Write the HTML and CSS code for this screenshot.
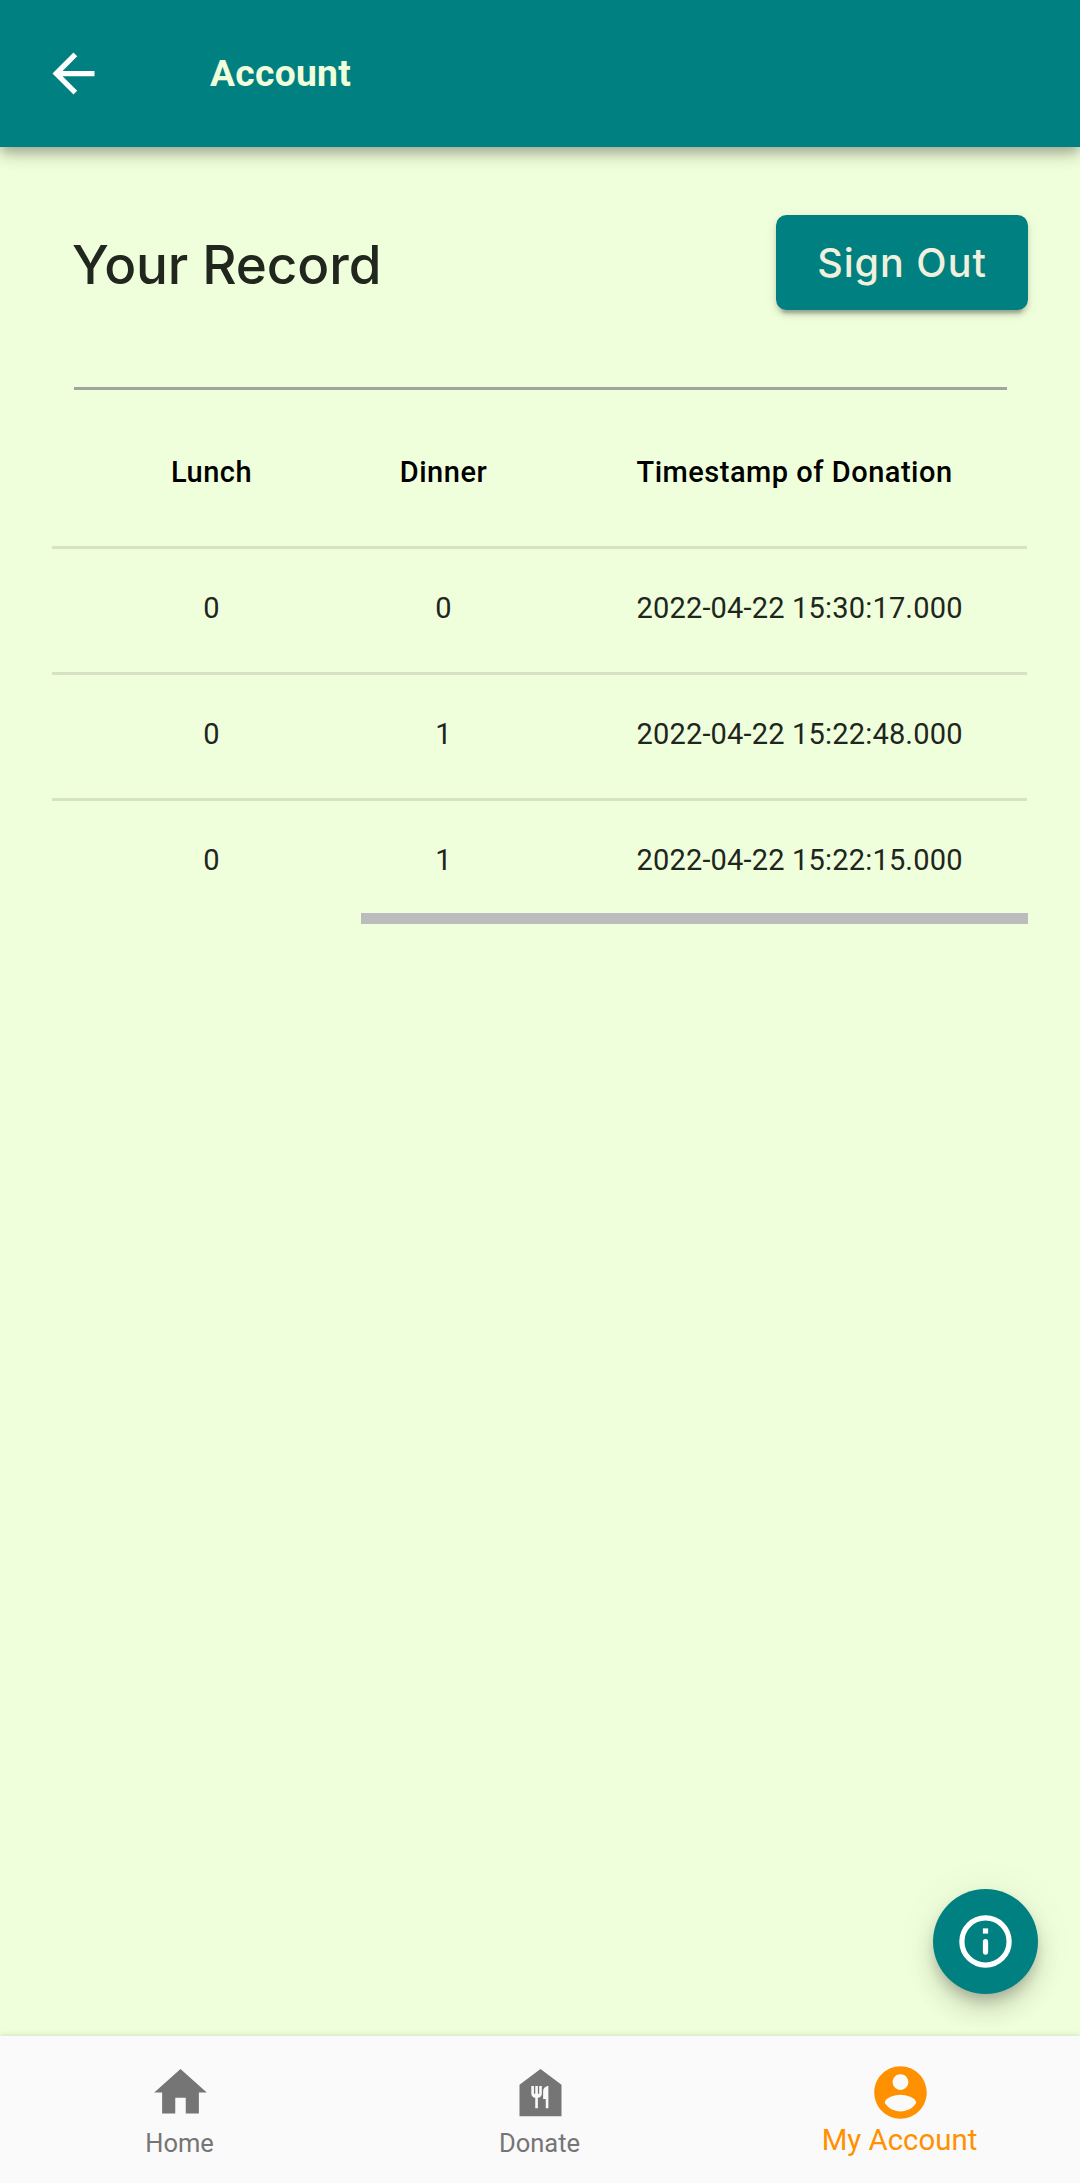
FILE: index.html
```html
<!DOCTYPE html>
<html lang="en">
<head>
<meta charset="utf-8">
<title>Account</title>
<link rel="stylesheet" href="styles.css">
</head>
<body>
<div class="app">
  <header class="app-bar">
    <svg class="icon" viewBox="0 0 24 24"><path d="M20 11H7.83l5.59-5.59L12 4l-8 8 8 8 1.41-1.41L7.83 13H20z"/></svg>
    <h1 class="app-title">Account</h1>
  </header>
  <main class="content">
    <section class="record-head">
      <h2 class="record-title"><span>Your Record</span></h2>
      <button class="sign-out"><span>Sign Out</span></button>
    </section>
    <div class="divider"></div>
    <section class="records">
      <div class="row row-head"><span>Lunch</span><span>Dinner</span><span class="time">Timestamp of Donation</span></div>
      <div class="row"><span>0</span><span>0</span><span class="time">2022-04-22 15:30:17.000</span></div>
      <div class="row"><span>0</span><span>1</span><span class="time">2022-04-22 15:22:48.000</span></div>
      <div class="row"><span>0</span><span>1</span><span class="time">2022-04-22 15:22:15.000</span></div>
      <div class="scrollbar"></div>
    </section>
    <button class="fab" aria-label="Information">
      <svg class="icon" viewBox="0 0 24 24"><circle cx="12" cy="12" r="9" fill="none" stroke="currentColor" stroke-width="2"/><path d="M11 7h2v2h-2z"/><rect x="11" y="11" width="2" height="6" rx="1"/></svg>
    </button>
  </main>
  <nav class="bottom-nav">
    <a class="nav-item">
      <svg class="icon" viewBox="0 0 24 24"><path d="M10 20v-6h4v6h5v-8h3L12 3 2 12h3v8z"/></svg>
      <span>Home</span>
    </a>
    <a class="nav-item">
      <svg class="icon" viewBox="0 0 24 24"><path d="M12 3L4 9v12h16V9L12 3zM12.5 12.5c0 .83-.67 1.5-1.5 1.5v4h-1v-4c-.83 0-1.5-.67-1.5-1.5v-3h1v3h.5v-3h1v3h.5v-3h1v3zM15 18h-1v-3.5h-1v-3c0-1.1.9-2 2-2V18z" fill-rule="evenodd"/></svg>
      <span>Donate</span>
    </a>
    <a class="nav-item active">
      <svg class="icon" viewBox="0 0 24 24"><path fill-rule="evenodd" d="M12 2C6.48 2 2 6.48 2 12s4.48 10 10 10 10-4.48 10-10S17.52 2 12 2zm0 3c1.66 0 3 1.34 3 3s-1.34 3-3 3-3-1.34-3-3 1.34-3 3-3zm0 14.2c-2.5 0-4.71-1.28-6-3.22.03-1.99 4-3.08 6-3.08 1.99 0 5.97 1.09 6 3.08-1.29 1.94-3.5 3.22-6 3.22z"/></svg>
      <span>My Account</span>
    </a>
  </nav>
</div>
</body>
</html>
```
FILE: styles.css
```css
* { box-sizing: border-box; }
body { margin: 0; font-family: Roboto, sans-serif; background: #f0ffdb; }
button { border: 0; padding: 0; font: inherit; }
.app { position: relative; display: flex; flex-direction: column; height: 2183px; overflow: hidden; }
.icon { display: block; flex: none; width: 63px; height: 63px; fill: currentColor; }

.app-bar {
  position: relative;
  display: flex;
  align-items: center;
  gap: 105px;
  height: 147px;
  padding: 0 42px;
  background: #008080;
  color: #fff;
  box-shadow: 0 5px 10px -2px rgba(0,0,0,.2), 0 10px 13px rgba(0,0,0,.14), 0 3px 26px rgba(0,0,0,.08);
}
.app-title { margin: 0; font-size: 37.2px; line-height: 44px; font-weight: 700; letter-spacing: .3px; color: #f0ffdb; padding-bottom: 1px; }

.content { flex: 1; padding-top: 68px; }
.record-head { display: flex; justify-content: space-between; align-items: center; height: 95px; padding: 0 52.5px 0 72px; }
.record-title { margin: 0; font-family: Inter, sans-serif; font-size: 53px; line-height: 64px; font-weight: 500; letter-spacing: -.1px; color: #21261e; padding-top: 5px; }
.sign-out {
  width: 252px;
  height: 95px;
  border-radius: 10.5px;
  background: #008080;
  color: #f0f0dd;
  font-family: Inter, sans-serif;
  font-size: 39.5px;
  font-weight: 500;
  letter-spacing: 1px;
  text-indent: 1px;
  box-shadow: 0 8px 3px -5px rgba(0,0,0,.2), 0 5px 5px rgba(0,0,0,.14), 0 3px 13px rgba(0,0,0,.08);
}
.divider { height: 3px; margin: 77px 73px 0 74px; background: #a1a59b; }

.records { margin: 9px 53px 0 52px; }
.row {
  display: grid;
  grid-template-columns: 319px 145px 1fr;
  align-items: center;
  height: 126px;
  border-top: 3px solid #d7e1c3;
  padding: 0 0 6px;
  font-size: 29px;
  line-height: 36px;
  letter-spacing: .18px;
  color: #20251d;
  text-align: center;
}
.row-head { height: 147px; border-top: 0; padding: 0 0 2px; font-weight: 500; letter-spacing: .5px; color: #000; }
.row .time { text-align: left; padding-left: 120.5px; }
.scrollbar { height: 11px; margin: -11px -1px 0 309px; background: #bcbcbc; }

.fab {
  position: absolute;
  left: 933px;
  top: 1889px;
  display: flex;
  align-items: center;
  justify-content: center;
  width: 105px;
  height: 105px;
  border-radius: 50%;
  background: #008080;
  color: #fff;
  box-shadow: 0 8px 13px -3px rgba(0,0,0,.2), 0 16px 26px rgba(0,0,0,.14), 0 3px 47px rgba(0,0,0,.06);
}

.bottom-nav {
  position: relative;
  display: grid;
  grid-template-columns: repeat(3, 1fr);
  height: 147px;
  background: #fafafa;
  box-shadow: 0 -1px 5px rgba(0,0,0,.12);
}
.nav-item { display: flex; flex-direction: column; align-items: center; padding-top: 25px; font-size: 25.5px; line-height: 38px; color: #757575; }
.nav-item span { padding-right: 1px; }
.nav-item.active { font-size: 29.4px; line-height: 32px; color: #ff9100; }
```
